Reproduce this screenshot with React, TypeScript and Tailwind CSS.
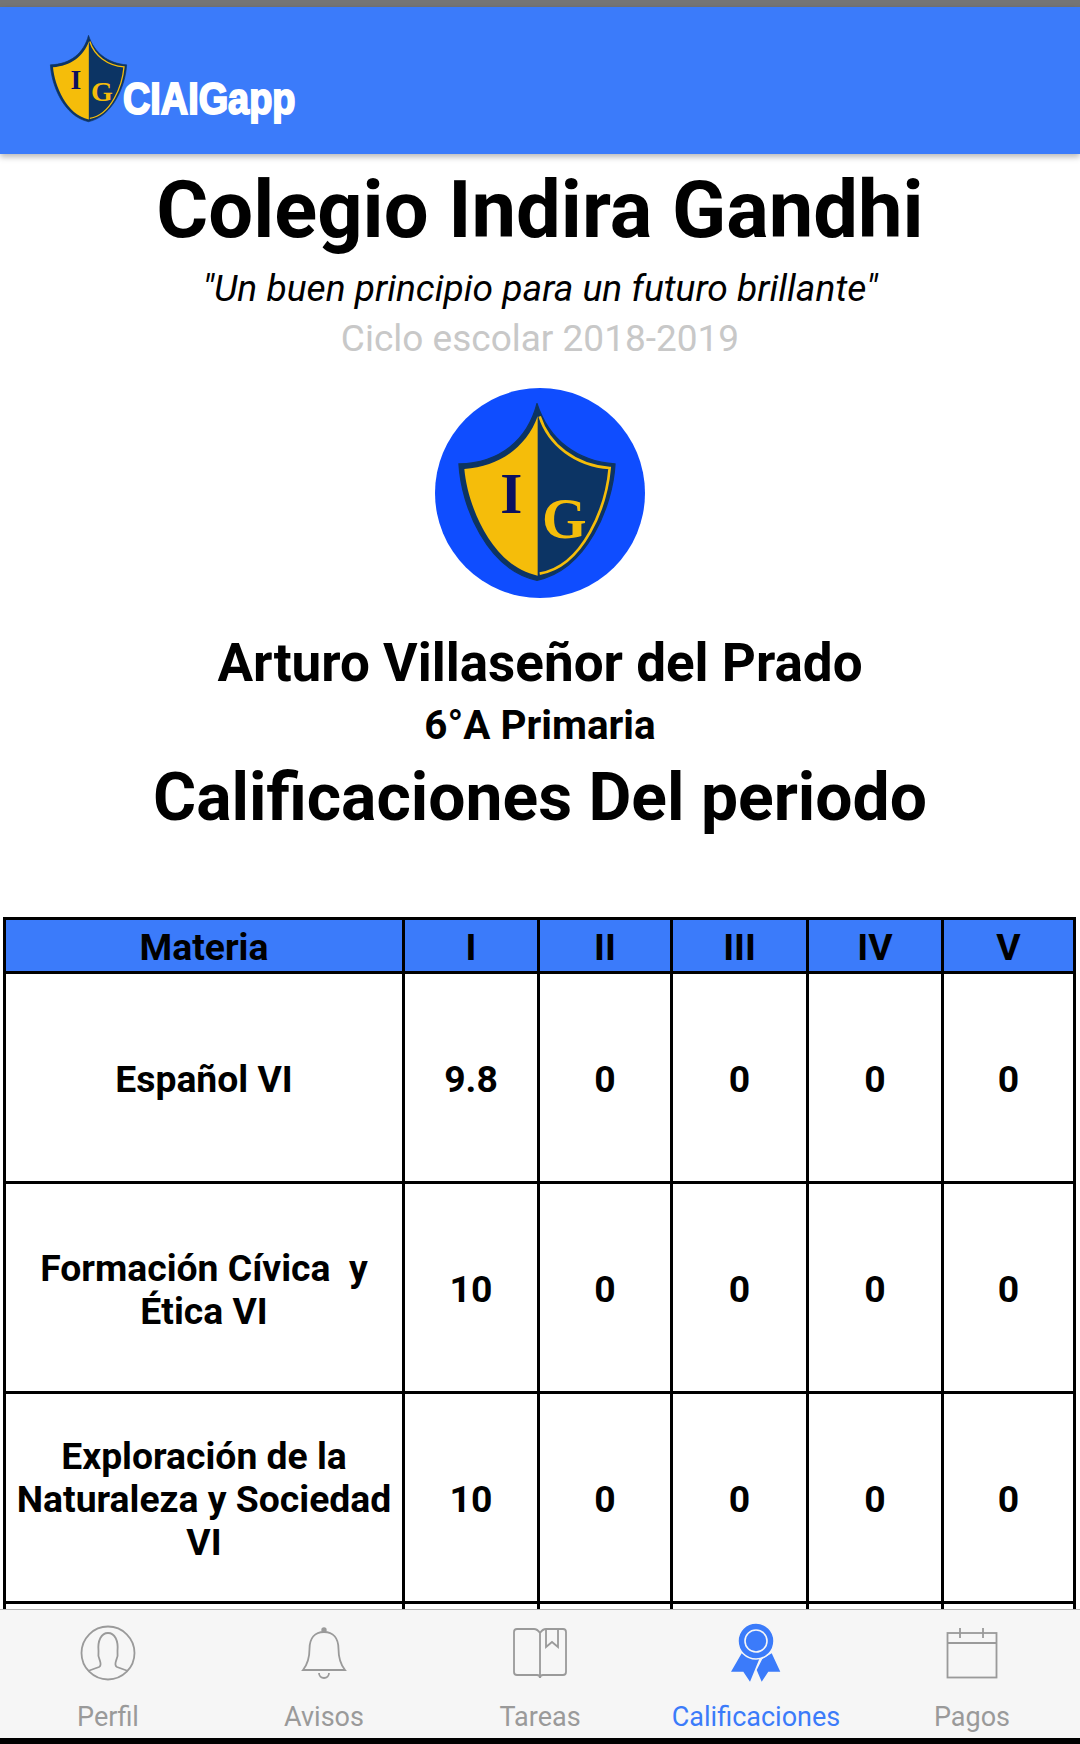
function Shield({ className }: { className: string }) {
  return (
    <svg viewBox="110 60 480 540" className={className}>
      <path
        d="M350 62C322 170 240 240 116 243C123 370 200 560 350 592C500 560 577 370 584 243C470 235 385 170 350 62Z"
        fill="#0c3464"
        stroke="#0f3560"
        strokeWidth="4"
      />
      <path d="M352 100V578C215 550 142 370 132 258C240 250 320 190 352 100Z" fill="#f5bd0a" />
      <path
        d="M358 100C385 185 465 248 568 255C558 370 490 550 358 572"
        fill="none"
        stroke="#f5bd0a"
        strokeWidth="8"
      />
      <text x="273" y="390" textAnchor="middle" fontFamily="'Liberation Serif', serif" fontWeight="700" fontSize="170" fill="#0b1060">I</text>
      <text x="432" y="464" textAnchor="middle" fontFamily="'Liberation Serif', serif" fontWeight="700" fontSize="172" fill="#f5bd0a">G</text>
    </svg>
  );
}

function ProfileIcon() {
  return (
    <svg viewBox="0 0 64 64" className="h-16 w-16" fill="none" stroke="#9a9a9a" strokeWidth="1.8">
      <circle cx="32" cy="32" r="26.5" />
      <path d="M12 50L23 46C25 45 25 43 24 40C22 36 22 33 22.500 30C21.500 20 25 12 32 12C39 12 42.500 20 41.500 30C42 33 42 36 40 40C39 43 39 45 41 46L52 50" />
    </svg>
  );
}

function BellIcon() {
  return (
    <svg viewBox="0 0 64 64" className="h-16 w-16" fill="none" stroke="#9a9a9a" strokeWidth="1.8">
      <path d="M11 49C15 44 17.500 38 17.500 28C17.500 17 23 11 32 11C41 11 46.500 17 46.500 28C46.500 38 49 44 53 49Z" />
      <circle cx="32" cy="9" r="1.800" fill="#9a9a9a" />
      <path d="M27 52A5 5 0 0 0 37 52" />
    </svg>
  );
}

function BookIcon() {
  return (
    <svg viewBox="0 0 64 64" className="h-16 w-16" fill="none" stroke="#9a9a9a" strokeWidth="1.8">
      <path d="M32 12C30 9 28 8 26 8H9C7 8 6 9 6 11V51C6 53 7 54 9 54H29C31 54 32 55 32 57C32 55 33 54 35 54H55C57 54 58 53 58 51V11C58 9 57 8 55 8H38C36 8 34 9 32 12V57" />
      <path d="M38 8V26L44 21L50 26V8" />
    </svg>
  );
}

function MedalIcon() {
  return (
    <svg viewBox="0 0 64 64" className="h-16 w-16" fill="#3b7bfa">
      <path d="M7 50.700L17.700 32.300L35.300 38L26 60.700L19.300 50.700Z" />
      <path d="M47.700 32.300L56.300 50.700H44.300L37.700 60.700L32.700 49L38.300 38Z" />
      <circle cx="32" cy="20" r="18" stroke="#f6f6f6" strokeWidth="1.5" />
      <circle cx="32" cy="20" r="11" fill="none" stroke="#f6f6f6" strokeWidth="1.6" />
    </svg>
  );
}

function CalendarIcon() {
  return (
    <svg viewBox="0 0 64 64" className="h-16 w-16" fill="none" stroke="#9a9a9a" strokeWidth="1.8">
      <rect x="7.500" y="12" width="49" height="44.500" />
      <path d="M7.500 22H56.500M20 7V17M43 7V17" />
    </svg>
  );
}

const rows = [
  { subject: "Español VI", grade: "9.8" },
  { subject: "Formación Cívica\u00a0 y Ética VI", grade: "10" },
  { subject: "Exploración de la Naturaleza y Sociedad VI", grade: "10" },
  { subject: "", grade: "" },
];

const tabs = [
  { label: "Perfil", icon: <ProfileIcon /> },
  { label: "Avisos", icon: <BellIcon /> },
  { label: "Tareas", icon: <BookIcon /> },
  { label: "Calificaciones", icon: <MedalIcon />, active: true },
  { label: "Pagos", icon: <CalendarIcon /> },
];

export default function App() {
  return (
    <div className="flex h-[1744px] flex-col overflow-hidden bg-white font-['Roboto',sans-serif] text-black">
      <div className="h-[7px] bg-[#757575]" />
      <header className="relative z-10 flex h-[147px] items-start bg-[#3b7bfa] pl-[49px] pt-[28px] shadow-[0_3px_6px_rgba(0,0,0,0.28)]">
        <Shield className="h-[88px] w-[79px]" />
        <span className="mt-[39px] -ml-[5px] origin-left scale-x-[0.86] whitespace-nowrap font-['Liberation_Sans',sans-serif] text-[44px] leading-[50px] font-bold text-white [-webkit-text-stroke:2px_white]">
          CIAIGapp
        </span>
      </header>

      <main className="flex-1 overflow-hidden">
        <div className="flex flex-col items-center pt-3 text-center">
          <h1 className="text-[79.5px] leading-[88px] font-bold">Colegio Indira Gandhi</h1>
          <p className="mt-[12px] text-[37.2px] leading-[44px] italic">"Un buen principio para un futuro brillante"</p>
          <p className="mt-[7px] text-[37px] leading-[44px] text-[#c8c8c8]">Ciclo escolar 2018-2019</p>
          <div className="mt-[27px] flex h-[210px] w-[210px] items-center justify-center rounded-full bg-[#0f4dff]">
            <Shield className="h-[180px] w-[160px] -translate-x-[3px]" />
          </div>
          <h2 className="mt-[35px] text-[53px] leading-[60px] font-bold">Arturo Villaseñor del Prado</h2>
          <p className="mt-[11px] text-[40.4px] leading-[44px] font-bold">6°A Primaria</p>
          <h2 className="mt-[12px] text-[66px] leading-[76px] font-bold">Calificaciones Del periodo</h2>
        </div>

        <table className="mx-[3px] mt-[81px] w-[1070px] table-fixed border-collapse text-center text-[37.3px] leading-[43px] font-bold">
          <colgroup>
            <col className="w-[399px]" />
            <col className="w-[135px]" />
            <col className="w-[133px]" />
            <col className="w-[136px]" />
            <col className="w-[135px]" />
            <col className="w-[132px]" />
          </colgroup>
          <thead>
            <tr className="h-[54px] bg-[#3b7bfa]">
              {["Materia", "I", "II", "III", "IV", "V"].map((h) => (
                <th key={h} className="border-[3px] border-black p-0 pt-[4px] font-bold">{h}</th>
              ))}
            </tr>
          </thead>
          <tbody>
            {rows.map((row, i) => (
              <tr key={i} className="h-[210px]">
                <td className="border-[3px] border-black px-2 pt-[4px] pb-0">{row.subject}</td>
                <td className="border-[3px] border-black p-0 pt-[4px]">{row.grade}</td>
                {[0, 1, 2, 3].map((n) => (
                  <td key={n} className="border-[3px] border-black p-0 pt-[4px]">{row.subject ? "0" : ""}</td>
                ))}
              </tr>
            ))}
          </tbody>
        </table>
      </main>

      <footer className="grid h-[129px] grid-cols-5 border-t border-[#b5b5b5] bg-[#f6f6f6] pt-[11px]">
        {tabs.map((tab) => (
          <div key={tab.label} className="flex flex-col items-center">
            {tab.icon}
            <span className={`mt-4 text-[27px] leading-[32px] ${tab.active ? "text-[#3b7bfa]" : "text-[#9a9a9a]"}`}>
              {tab.label}
            </span>
          </div>
        ))}
      </footer>
      <div className="h-[6px] bg-black" />
    </div>
  );
}
